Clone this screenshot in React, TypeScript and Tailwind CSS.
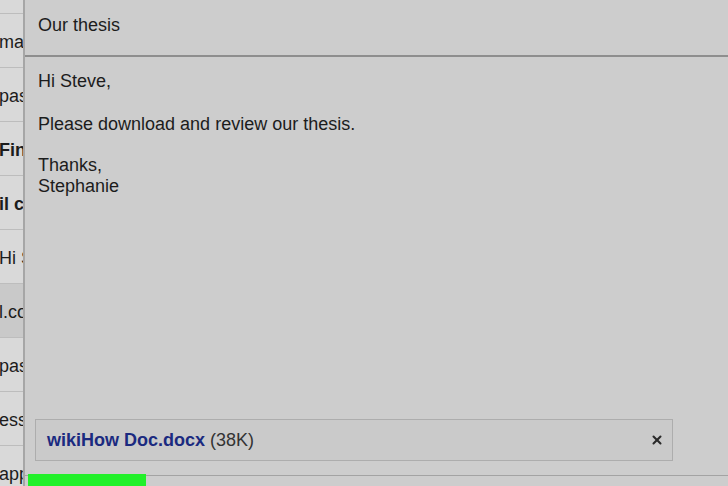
import { X } from "lucide-react";

const listRows = [
  { text: "ma", bold: false },
  { text: "pas", bold: false },
  { text: "Fin", bold: true },
  { text: "il c", bold: true },
  { text: "Hi S", bold: false },
  { text: "l.co", bold: false, selected: true },
  { text: "pas", bold: false },
  { text: "ess", bold: false },
  { text: "app", bold: false },
];

const font = { fontFamily: '"Liberation Sans", Arial, sans-serif' };

export default function App() {
  return (
    <div
      className="flex h-[486px] w-[728px] overflow-hidden bg-[#cdcdcd] text-[#1c1c1c]"
      style={font}
    >
      {/* Inbox list peeking out behind the message */}
      <div className="flex w-[25px] shrink-0 flex-col border-r-2 border-[#a6a6a6] bg-[#d9d9d9]">
        <div className="h-[14px] shrink-0 border-b border-[#bdbdbd]" />
        {listRows.map((row, i) => (
          <div
            key={i}
            className={
              "flex h-[54px] shrink-0 items-center overflow-hidden border-b border-[#bdbdbd] pt-[4px] whitespace-nowrap text-[18px] " +
              (row.selected ? "bg-[#c9c9c9]" : "") +
              (row.bold ? " font-bold" : "")
            }
          >
            <span className="-ml-[1px]">{row.text}</span>
          </div>
        ))}
      </div>

      {/* Message pane */}
      <div className="flex min-w-0 flex-1 flex-col">
        <div className="flex h-[57px] shrink-0 items-center border-b-2 border-[#8e8e8e] pl-[13px] pb-[4px] text-[18px]">
          Our thesis
        </div>

        <div className="flex-1 pl-[13px] pt-[14px] text-[18px] leading-[21px]">
          <p>Hi Steve,</p>
          <p className="mt-[22px]">Please download and review our thesis.</p>
          <p className="mt-[20px]">
            Thanks,
            <br />
            Stephanie
          </p>
        </div>

        <div className="ml-[10px] mr-[55px] flex h-[42px] shrink-0 items-center justify-between border border-[#adadad] bg-[#cacaca] pl-[11px] pr-[8px] text-[18px]">
          <div>
            <span className="font-bold text-[#1b2a80]">wikiHow Doc.docx</span>{" "}
            <span className="text-[#333333]">(38K)</span>
          </div>
          <X className="h-[14px] w-[14px] text-[#2a2a2a]" strokeWidth={3.5} />
        </div>

        <div className="mt-[14px] h-[11px] shrink-0 border-t border-[#a3a3a3]">
          <div className="-mt-[2px] ml-[3px] h-[13px] w-[118px] bg-[#22f02a]" />
        </div>
      </div>
    </div>
  );
}
